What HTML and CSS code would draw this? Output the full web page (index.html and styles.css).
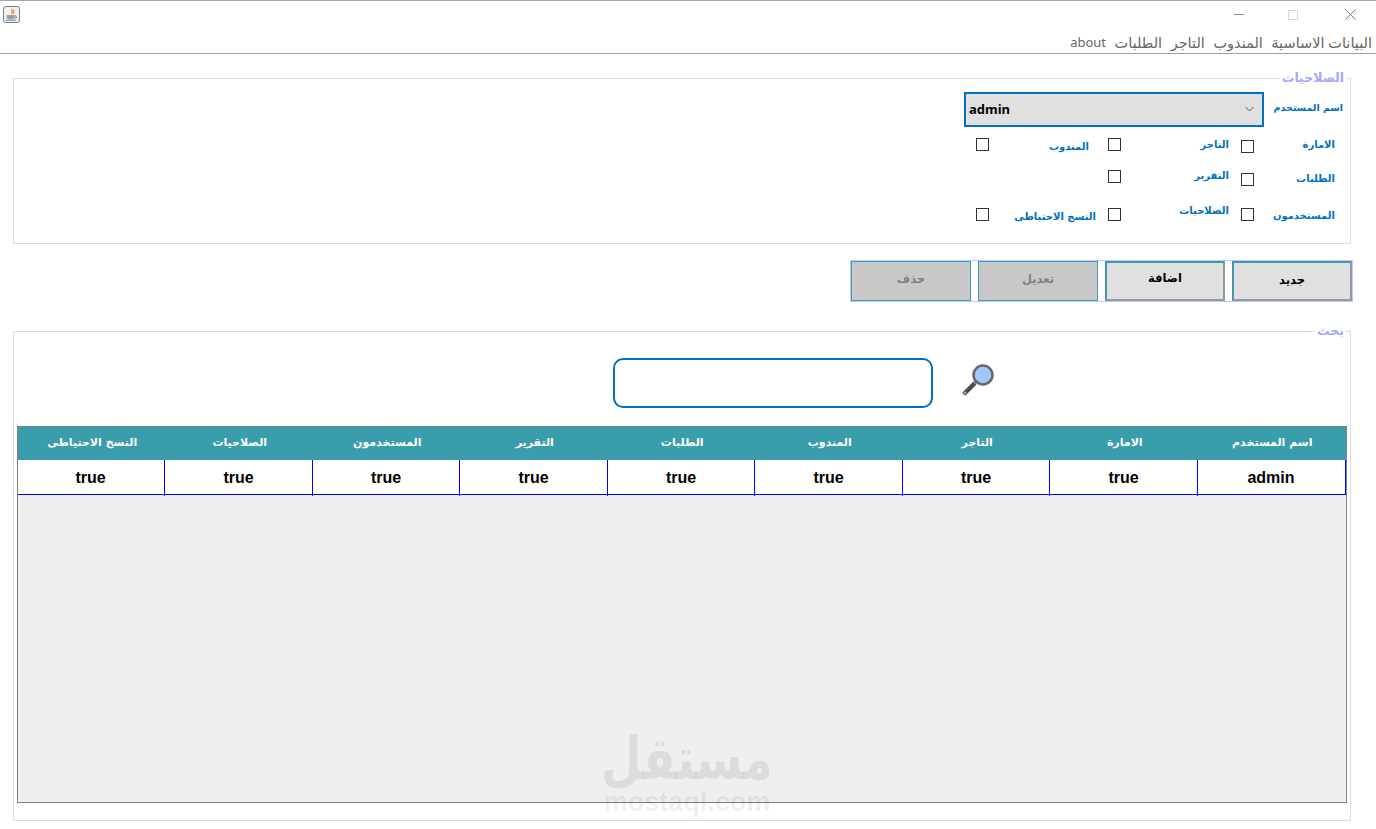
FILE: index.html
```html
<!DOCTYPE html>
<html lang="ar">
<head>
<meta charset="utf-8">
<title>الصلاحيات</title>
<link rel="stylesheet" href="styles.css">
</head>
<body>
<div class="window">
  <header class="titlebar">
    <svg class="app-icon" width="17" height="17" viewBox="0 0 18 18">
      <rect x="0.5" y="0.5" width="17" height="17" rx="2.5" fill="#f1f1f4" stroke="#70707c"/>
      <path d="M10 3c-2 2 1 3-1 5.500M12 4c-1.500 1.500 0 2.500-1 4" fill="none" stroke="#e8913a" stroke-width="1.500"/>
      <path d="M4 9.500h8v2.500c0 1.500-1 2-2 2H6c-1 0-2-.5-2-2z" fill="#8fa3ad"/>
      <path d="M12 10.500h2v2h-2M3 15h11" fill="none" stroke="#667c88"/>
    </svg>
    <div class="controls">
      <svg class="ctl-min" width="10" height="11" viewBox="0 0 10 11"><path d="M0 5.500h10" stroke="#8a8a8a"/></svg>
      <svg class="ctl-max" width="11" height="11" viewBox="0 0 11 11"><rect x="1.500" y="0.500" width="9" height="9" fill="none" stroke="#d8d8d8"/></svg>
      <svg class="ctl-close" width="11" height="11" viewBox="0 0 11 11"><path d="M.5.500l10 10M10.500.500l-10 10" stroke="#7c7c7c"/></svg>
    </div>
  </header>
  <nav class="menubar">
    <span>البيانات الاساسية</span><span>المندوب</span><span>التاجر</span><span>الطلبات</span><span class="menu-en">about</span>
  </nav>

  <fieldset class="panel panel-perms">
    <legend>الصلاحيات</legend>
    <div class="user-row">
      <label class="user-label">اسم المستخدم</label>
      <div class="combo">
        <svg width="9" height="6" viewBox="0 0 9 6"><path d="M.5 1l4 4 4-4" fill="none" stroke="#555"/></svg>
        <span class="combo-value">admin</span>
      </div>
    </div>
    <div class="perm-grid">
      <label class="lbl t1">الامارة</label><span class="chk t4"></span>
      <label class="lbl t1">التاجر</label><span class="chk t2"></span>
      <label class="lbl t3 end">المندوب</label><span class="chk t2"></span>

      <label class="lbl t3">الطلبات</label><span class="chk t5"></span>
      <label class="lbl t0">التقرير</label><span class="chk t2"></span>
      <span></span><span></span>

      <label class="lbl t5">المستخدمون</label><span class="chk t5"></span>
      <label class="lbl t0">الصلاحيات</label><span class="chk t5"></span>
      <label class="lbl t6">النسخ الاحتياطى</label><span class="chk t5"></span>
    </div>
  </fieldset>

  <div class="actions">
    <button class="btn btn-new">جديد</button>
    <button class="btn btn-up">اضافة</button>
    <button class="btn" disabled>تعديل</button>
    <button class="btn" disabled>حذف</button>
  </div>

  <fieldset class="panel panel-search">
    <legend>بحث</legend>
    <div class="search-row">
      <div class="search-input"></div>
      <svg class="lens" width="34" height="34" viewBox="0 0 34 34">
        <path d="M3 31l9-9" stroke="#4c4c50" stroke-width="4.500" stroke-linecap="round"/>
        <path d="M2 32l2-2" stroke="#c9a878" stroke-width="2"/>
        <path d="M12 22l3-3" stroke="#8a8a8a" stroke-width="2"/>
        <circle cx="21" cy="13" r="9.500" fill="#9cc8ff" stroke="#66666c" stroke-width="2.500"/>
      </svg>
    </div>
    <div class="table">
      <div class="thead">
        <div>اسم المستخدم</div><div>الامارة</div><div>التاجر</div><div>المندوب</div><div>الطلبات</div><div>التقرير</div><div>المستخدمون</div><div>الصلاحيات</div><div>النسخ الاحتياطى</div>
      </div>
      <div class="tbody">
        <div class="trow">
          <div>admin</div><div>true</div><div>true</div><div>true</div><div>true</div><div>true</div><div>true</div><div>true</div><div>true</div>
        </div>
      </div>
    </div>
  </fieldset>

  <div class="watermark">
    <div class="wm-ar">مستقل</div>
    <div class="wm-en">mostaql.com</div>
  </div>
</div>
</body>
</html>
```
FILE: styles.css
```css
* { box-sizing: border-box; }
html, body { margin: 0; padding: 0; background: #fff; }
body { font-family: "Liberation Sans", "DejaVu Sans", sans-serif; }

.window {
  position: relative;
  width: 1376px;
  height: 829px;
  overflow: hidden;
  background: #fff;
  border-top: 1px solid #a8a8a8;
}

.titlebar {
  display: flex;
  justify-content: space-between;
  height: 33px;
  padding: 5px 0 0 3px;
}
.app-icon { display: block; }
.controls { display: flex; align-items: flex-start; }
.ctl-min { margin-top: 3px; }
.ctl-max { margin: 4px 0 0 43px; }
.ctl-close { margin: 3px 20px 0 47px; }

.menubar {
  direction: rtl;
  display: flex;
  gap: 8.5px;
  height: 20px;
  padding-right: 4px;
  border-bottom: 1px solid #a0a0a0;
  font: 14.5px/17px "Noto Sans", "DejaVu Sans", sans-serif;
  color: #666;
}
.menu-en { font-size: 13px; }

.panel {
  direction: rtl;
  display: block;
  min-width: 0;
  margin: 0 25px 0 13px;
  padding: 0;
  border: 1px solid #dcdcdc;
}
.panel legend {
  margin-right: 4px;
  padding: 0 2px;
  height: 16px;
  font: bold 12.5px/16px "DejaVu Sans", sans-serif;
  color: #a6a6ff;
}
.panel-perms { margin-top: 16px; height: 174px; }
.panel-search { margin-top: 21px; height: 498px; }

.user-row { display: flex; height: 35px; margin-top: 6px; padding-right: 7px; }
.user-label {
  width: 79px;
  white-space: nowrap;
  font: bold 9.5px/32px "DejaVu Sans", sans-serif;
  color: #0070c0;
}
.combo {
  direction: ltr;
  display: flex;
  flex-direction: row-reverse;
  justify-content: space-between;
  align-items: center;
  width: 300px;
  height: 35px;
  padding: 0 8px 2px 3px;
  border: 2px solid #0070c0;
  background: #e0e0e0;
}
.combo-value { font: bold 13px "Noto Sans", sans-serif; color: #000; }

.perm-grid {
  display: grid;
  grid-template-columns: 81px 13px 120px 13px 119px 13px;
  grid-template-rows: 32px 35px 30px;
  margin-top: 9px;
  padding-right: 15px;
}
.lbl {
  font: bold 10px/16px "DejaVu Sans", sans-serif;
  color: #0070c0;
  padding-right: 12px;
  white-space: nowrap;
}
.lbl:nth-child(6n+1) { padding-right: 0; }
.lbl.end { padding-right: 19px; }
.chk {
  display: block;
  width: 13px;
  height: 13px;
  border: 1px solid #333;
  background: #fff;
}
.t0 { margin-top: 0; }
.t1 { margin-top: 1px; }
.t2 { margin-top: 2px; }
.t3 { margin-top: 3px; }
.t4 { margin-top: 4px; }
.t5 { margin-top: 5px; }
.t6 { margin-top: 6px; }

.actions {
  direction: rtl;
  display: flex;
  gap: 7px;
  width: 503px;
  height: 42px;
  margin: 16px 23px 0 auto;
  border: 1px solid #c4c4ff;
}
.btn {
  width: 120px;
  height: 40px;
  padding: 0;
  border: 2px solid;
  border-color: #3f9aa8 #8f9a9e #8f9a9e #3f9aa8;
  outline: 0;
  background: #e0e0e0;
  font: bold 11.5px "DejaVu Sans", sans-serif;
  color: #000;
}
.btn-new { padding-bottom: 3px; }
.btn-up { padding-bottom: 6px; }
.btn:disabled {
  padding-bottom: 4px;
  border: 1px solid #3aa0ac;
  background: #c8c8c8;
  color: #808080;
}

.search-row {
  direction: ltr;
  display: flex;
  align-items: flex-start;
  gap: 29px;
  height: 69px;
  padding: 19px 0 0 599px;
}
.search-input {
  width: 320px;
  height: 50px;
  border: 2px solid #0070c0;
  border-radius: 10px;
  background: #fff;
}
.lens { margin-top: 4px; }

.table {
  width: 1330px;
  height: 377px;
  margin: 18px 3px 0 0;
  border: 1px solid #808080;
  background: #efefef;
}
.thead, .trow {
  display: grid;
  grid-template-columns: repeat(9, 147.5px);
}
.thead {
  height: 33px;
  background: #3a9dab;
  color: #fff;
  font: bold 11px/32px "DejaVu Sans", sans-serif;
  text-align: center;
}
.trow {
  height: 35px;
  background: #fff;
  border-bottom: 1px solid #00f;
  border-right: 1px solid #00f;
  width: 1328px;
  padding-right: .75px;
  font: bold 16px/36px "Liberation Sans", sans-serif;
  color: #000;
  text-align: center;
}
.trow > div { border-left: 1px solid #00f; }
.trow > div:last-child { border-left: 0; }

.watermark {
  position: absolute;
  left: 587px;
  top: 720px;
  width: 200px;
  text-align: center;
  color: rgba(0, 0, 0, 0.08);
  pointer-events: none;
}
.wm-ar {
  font: bold 47px/76px "DejaVu Sans", sans-serif;
  direction: rtl;
  transform: scaleY(1.25);
}
.wm-en { font: bold 27px/26px "Liberation Sans", sans-serif; margin-top: -8px; }
```
